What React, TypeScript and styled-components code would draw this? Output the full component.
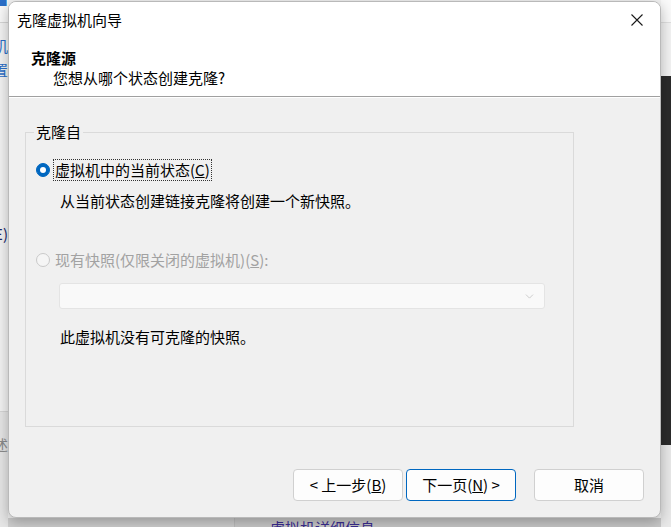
import * as React from 'react';
import styled, { createGlobalStyle } from 'styled-components';
import { ChevronDown } from 'lucide-react';

const GlobalStyle = createGlobalStyle`
  html, body {
    margin: 0;
    padding: 0;
    width: 671px;
    height: 527px;
    overflow: hidden;
    font-family: "Noto Sans CJK SC", "Noto Sans", sans-serif;
  }
`;

const Screen = styled.div`
  position: relative;
  width: 671px;
  height: 527px;
  overflow: hidden;
  background: #f3f3f3;
`;

/* ---------- the app window behind the dialog ---------- */

const Backdrop = styled.div`
  display: grid;
  grid-template-columns: 8px 1fr 10px;
  grid-template-rows: 1fr 9px;
  width: 100%;
  height: 100%;
`;

const LeftEdge = styled.div`
  grid-row: 1 / 3;
  display: grid;
  grid-template-rows: 23px 389px 1fr;
  overflow: hidden;
  background: #f7f7f7;
`;

const EdgeCell = styled.div<{ $bg: string; $line?: boolean }>`
  display: flex;
  flex-direction: column;
  align-items: flex-end;
  overflow: hidden;
  background: ${(p) => p.$bg};
  border-bottom: ${(p) => (p.$line ? '1px solid #d6d6d6' : 'none')};
`;

const Fragment = styled.span<{ $color: string; $top: number }>`
  display: block;
  margin-top: ${(p) => p.$top}px;
  white-space: nowrap;
  font-size: 15px;
  line-height: 18px;
  color: ${(p) => p.$color};
`;

const BottomStrip = styled.div`
  grid-column: 2;
  grid-row: 2;
  display: grid;
  grid-template-columns: 227px 1fr;
  background: #c9c9c9;
  overflow: hidden;
`;

const BottomLeft = styled.div`
  background: #cfcfcf;
  border-right: 1px solid #bdbdbd;
`;

const BottomText = styled.div`
  padding: 1px 0 0 35px;
  font-size: 15px;
  line-height: 18px;
  color: #3b2d91;
  white-space: nowrap;
`;

const RightEdge = styled.div`
  grid-column: 3;
  grid-row: 1 / 3;
  display: grid;
  grid-template-rows: 23px 53px 369px 1fr;
`;

const Block = styled.div<{ $bg: string; $line?: boolean }>`
  background: ${(p) => p.$bg};
  border-bottom: ${(p) => (p.$line ? '1px solid #e0e0e0' : 'none')};
`;

/* ---------- the dialog ---------- */

const Dialog = styled.div`
  position: absolute;
  left: 8px;
  top: 1px;
  width: 653px;
  height: 517px;
  box-sizing: border-box;
  display: flex;
  flex-direction: column;
  background: #f0f0f0;
  border: 1px solid #b9b9b9;
  border-radius: 8px;
  overflow: hidden;
  box-shadow: 0 4px 14px rgba(0, 0, 0, 0.28);
  color: #000;
  font-size: 15px;
`;

const Header = styled.div`
  background: #fff;
  border-bottom: 1px solid #a0a0a0;
  box-shadow: 0 1px 0 #fff;
  padding-bottom: 8px;
`;

const TitleBar = styled.div`
  height: 35px;
  display: flex;
  align-items: center;
  justify-content: space-between;
  padding: 0 13px 0 8px;
`;

const Title = styled.span`
  line-height: 20px;
`;

const CloseButton = styled.button`
  width: 20px;
  height: 20px;
  padding: 0;
  border: 0;
  background: transparent;
  display: flex;
  align-items: center;
  justify-content: center;
`;

const HeadTitle = styled.div`
  margin-top: 11px;
  padding-left: 22px;
  font-weight: 700;
  line-height: 20px;
`;

const HeadSub = styled.div`
  padding-left: 44px;
  line-height: 20px;
`;

const Body = styled.div`
  flex: 1;
  padding: 25px 86px 0 16px;
`;

const Group = styled.fieldset`
  margin: 0;
  height: 305px;
  box-sizing: border-box;
  padding: 18px 10px 0 10px;
  border: 1px solid #dadada;
`;

const Legend = styled.legend`
  margin-left: -2px;
  padding: 0 2px;
  line-height: 20px;
`;

const OptionRow = styled.label<{ $disabled?: boolean; $top?: number }>`
  display: flex;
  align-items: center;
  gap: 4px;
  margin-top: ${(p) => p.$top ?? 0}px;
  line-height: 20px;
  color: ${(p) => (p.$disabled ? '#a2a2a2' : '#000')};
`;

const Radio = styled.span<{ $checked?: boolean; $disabled?: boolean }>`
  box-sizing: border-box;
  width: 14px;
  height: 14px;
  border-radius: 50%;
  flex: none;
  background: ${(p) => (p.$checked ? '#0067c0' : '#f5f5f5')};
  border: 1px solid ${(p) => (p.$checked ? '#0067c0' : '#c9c9c9')};
  display: flex;
  align-items: center;
  justify-content: center;
  &::after {
    content: '';
    display: ${(p) => (p.$checked ? 'block' : 'none')};
    width: 6px;
    height: 6px;
    border-radius: 50%;
    background: #fff;
  }
`;

const OptionText = styled.span<{ $focused?: boolean }>`
  padding: 0 1px;
  outline: ${(p) => (p.$focused ? '1px dotted #333' : 'none')};
`;

const Key = styled.span`
  text-decoration: underline;
`;

const Note = styled.div<{ $top: number }>`
  margin: ${(p) => p.$top}px 0 0 24px;
  line-height: 20px;
`;

const Combo = styled.div`
  margin: 13px 0 0 23px;
  width: 486px;
  height: 26px;
  box-sizing: border-box;
  display: flex;
  align-items: center;
  justify-content: flex-end;
  padding-right: 8px;
  background: #f9f9f9;
  border: 1px solid #e4e4e4;
  border-radius: 3px;
`;

const Footer = styled.div`
  height: 71px;
  display: flex;
  align-items: flex-start;
  justify-content: flex-end;
  padding: 23px 16px 0 0;
  box-sizing: border-box;
`;

const Button = styled.button<{ $primary?: boolean; $gap: number }>`
  width: 110px;
  height: 32px;
  margin-left: ${(p) => p.$gap}px;
  box-sizing: border-box;
  background: #fdfdfd;
  border: 1px solid ${(p) => (p.$primary ? '#0067c0' : '#d0d0d0')};
  border-radius: 4px;
  font-family: inherit;
  font-size: 15px;
  line-height: 20px;
  color: #000;
  padding: 0;
`;

function CloseIcon() {
  return (
    <svg width="12" height="12" viewBox="0 0 12 12">
      <path d="M0.5 0.5 L11.5 11.5 M11.5 0.5 L0.5 11.5" stroke="#1a1a1a" strokeWidth="1.1" />
    </svg>
  );
}

export default function App() {
  return (
    <Screen>
      <GlobalStyle />
      <Backdrop>
        <LeftEdge>
          <EdgeCell $bg="#f9f9f9" $line>
            <Fragment $color="#2a6ec8" $top={-9}>■</Fragment>
          </EdgeCell>
          <EdgeCell $bg="#f3f3f3" $line>
            <Fragment $color="#2a6ec8" $top={14}>虚拟机</Fragment>
            <Fragment $color="#2a6ec8" $top={6}>设置</Fragment>
            <Fragment $color="#1b2a6b" $top={146}>(E)</Fragment>
          </EdgeCell>
          <EdgeCell $bg="#e6e6e6">
            <Fragment $color="#8b8b8b" $top={24}>描述</Fragment>
          </EdgeCell>
        </LeftEdge>
        <BottomStrip>
          <BottomLeft />
          <BottomText>虚拟机详细信息</BottomText>
        </BottomStrip>
        <RightEdge>
          <Block $bg="#fafafa" $line />
          <Block $bg="#f3f3f3" />
          <Block $bg="#2b2b2b" />
          <Block $bg="#e9e9e9" />
        </RightEdge>
      </Backdrop>

      <Dialog>
        <Header>
          <TitleBar>
            <Title>克隆虚拟机向导</Title>
            <CloseButton type="button" aria-label="关闭">
              <CloseIcon />
            </CloseButton>
          </TitleBar>
          <HeadTitle>克隆源</HeadTitle>
          <HeadSub>您想从哪个状态创建克隆?</HeadSub>
        </Header>

        <Body>
          <Group>
            <Legend>克隆自</Legend>
            <OptionRow>
              <Radio $checked />
              <OptionText $focused>
                虚拟机中的当前状态(<Key>C</Key>)
              </OptionText>
            </OptionRow>
            <Note $top={11}>从当前状态创建链接克隆将创建一个新快照。</Note>
            <OptionRow $disabled $top={39}>
              <Radio $disabled />
              <OptionText>
                现有快照(仅限关闭的虚拟机)(<Key>S</Key>):
              </OptionText>
            </OptionRow>
            <Combo>
              <ChevronDown size={13} color="#b5b5b5" strokeWidth={1.2} />
            </Combo>
            <Note $top={18}>此虚拟机没有可克隆的快照。</Note>
          </Group>
        </Body>

        <Footer>
          <Button type="button" $gap={0}>
            &lt; 上一步(<Key>B</Key>)
          </Button>
          <Button type="button" $gap={3} $primary>
            下一页(<Key>N</Key>) &gt;
          </Button>
          <Button type="button" $gap={18}>
            取消
          </Button>
        </Footer>
      </Dialog>
    </Screen>
  );
}
